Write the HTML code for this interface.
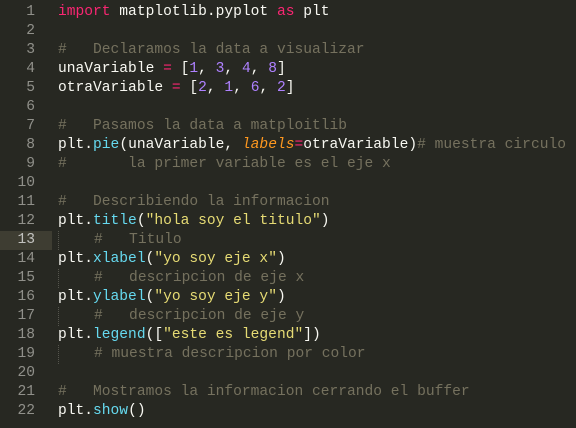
<!DOCTYPE html>
<html><head><style>
html,body{margin:0;padding:0;background:#272822;width:576px;height:428px;overflow:hidden}
.w{position:absolute;top:3px;left:0;width:576px}
.l{position:relative;height:19px;line-height:19px;font-family:"Liberation Mono",monospace;font-size:14.6px;white-space:pre;color:#f8f8f2}
.n{position:absolute;left:0;width:35px;text-align:right;color:#90908a}
.c{position:absolute;left:58px}
.hb{position:absolute;left:0;top:0;width:52px;height:19px;background:#3e3d32}
.g{border-left:1px dotted #55554d}
.k{color:#f92672}.num{color:#ae81ff}.f{color:#66d9ef}.s{color:#e6db74}.cm{color:#75715e}.a{color:#fd971f;font-style:italic}
</style></head><body><div class="w">
<div class="l"><span class="n">1</span><span class="c"><span class="k">import</span> matplotlib.pyplot <span class="k">as</span> plt</span></div>
<div class="l"><span class="n">2</span></div>
<div class="l"><span class="n">3</span><span class="c cm">#   Declaramos la data a visualizar</span></div>
<div class="l"><span class="n">4</span><span class="c">unaVariable <span class="k">=</span> [<span class="num">1</span>, <span class="num">3</span>, <span class="num">4</span>, <span class="num">8</span>]</span></div>
<div class="l"><span class="n">5</span><span class="c">otraVariable <span class="k">=</span> [<span class="num">2</span>, <span class="num">1</span>, <span class="num">6</span>, <span class="num">2</span>]</span></div>
<div class="l"><span class="n">6</span></div>
<div class="l"><span class="n">7</span><span class="c cm">#   Pasamos la data a matploitlib</span></div>
<div class="l"><span class="n">8</span><span class="c">plt.<span class="f">pie</span>(unaVariable, <span class="a">labels</span><span class="k">=</span>otraVariable)<span class="cm"># muestra circulo</span></span></div>
<div class="l"><span class="n">9</span><span class="c cm">#       la primer variable es el eje x</span></div>
<div class="l"><span class="n">10</span></div>
<div class="l"><span class="n">11</span><span class="c cm">#   Describiendo la informacion</span></div>
<div class="l"><span class="n">12</span><span class="c">plt.<span class="f">title</span>(<span class="s">"hola soy el titulo"</span>)</span></div>
<div class="l"><span class="hb"></span><span class="n" style="color:#c2c2bf">13</span><span class="c cm g">    #   Titulo</span></div>
<div class="l"><span class="n">14</span><span class="c">plt.<span class="f">xlabel</span>(<span class="s">"yo soy eje x"</span>)</span></div>
<div class="l"><span class="n">15</span><span class="c cm g">    #   descripcion de eje x</span></div>
<div class="l"><span class="n">16</span><span class="c">plt.<span class="f">ylabel</span>(<span class="s">"yo soy eje y"</span>)</span></div>
<div class="l"><span class="n">17</span><span class="c cm g">    #   descripcion de eje y</span></div>
<div class="l"><span class="n">18</span><span class="c">plt.<span class="f">legend</span>([<span class="s">"este es legend"</span>])</span></div>
<div class="l"><span class="n">19</span><span class="c cm g">    # muestra descripcion por color</span></div>
<div class="l"><span class="n">20</span></div>
<div class="l"><span class="n">21</span><span class="c cm">#   Mostramos la informacion cerrando el buffer</span></div>
<div class="l"><span class="n">22</span><span class="c">plt.<span class="f">show</span>()</span></div>
</div></body></html>
